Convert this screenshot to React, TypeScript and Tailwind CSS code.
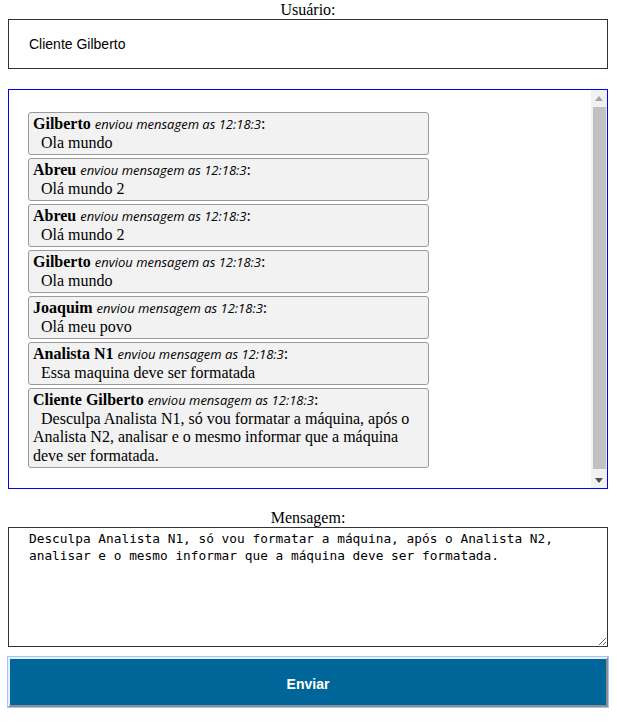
import React from "react";

const messages = [
  { name: "Gilberto", text: "Ola mundo" },
  { name: "Abreu", text: "Olá mundo 2" },
  { name: "Abreu", text: "Olá mundo 2" },
  { name: "Gilberto", text: "Ola mundo" },
  { name: "Joaquim", text: "Olá meu povo" },
  { name: "Analista N1", text: "Essa maquina deve ser formatada" },
  {
    name: "Cliente Gilberto",
    text: "Desculpa Analista N1, só vou formatar a máquina, após o Analista N2, analisar e o mesmo informar que a máquina deve ser formatada.",
  },
];

const serif = { fontFamily: '"Liberation Serif", "Times New Roman", serif' };

export default function App() {
  return (
    <div className="bg-white min-h-[723px] pl-2 pt-0" style={serif}>
      <div className="w-[600px] flex flex-col">
        <div className="text-center text-[16px] leading-[19px] text-black">Usuário:</div>
        <div className="h-[50px] border border-[#333] flex items-center pl-5 text-[14px] text-black font-['Liberation_Sans',Arial,sans-serif]">
          Cliente Gilberto
        </div>

        <div className="mt-5 h-[400px] border border-[#0000ff] flex">
          <div className="flex-1 pt-[22px] pl-[19px] overflow-hidden">
            {messages.map((m, i) => (
              <div
                key={i}
                className="w-[401px] mb-[3px] border border-[#9a9a9a] rounded-[3px] bg-[#f2f2f2] px-1 py-[2px] text-[16px] leading-[18.5px] text-black"
              >
                <div>
                  <b className="font-bold">{m.name}</b>{" "}
                  <i className="italic text-[13px] font-['Open_Sans',sans-serif]">
                    enviou mensagem as 12:18:3
                  </i>
                  :
                </div>
                <div>{"\u00a0\u00a0" + m.text}</div>
              </div>
            ))}
          </div>
          <div className="w-[16px] bg-[#f1f1f1] flex flex-col items-center">
            <div className="h-[16px] w-full flex items-center justify-center">
              <svg width="8" height="5" viewBox="0 0 8 5">
                <polygon points="0,5 8,5 4,0" fill="#a3a3a3" />
              </svg>
            </div>
            <div className="mt-[1px] w-[13px] h-[362px] bg-[#c1c1c1]" />
            <div className="flex-1" />
            <div className="h-[16px] w-full flex items-center justify-center">
              <svg width="8" height="5" viewBox="0 0 8 5">
                <polygon points="0,0 8,0 4,5" fill="#505050" />
              </svg>
            </div>
          </div>
        </div>

        <div className="mt-5 text-center text-[16px] leading-[18px] text-black">Mensagem:</div>
        <textarea
          className="h-[120px] border border-[#333] pl-[20px] pr-2 pt-[2px] text-[12.8px] leading-[17px] text-black font-['DejaVu_Sans_Mono',monospace] resize-y outline-none"
          defaultValue="Desculpa Analista N1, só vou formatar a máquina, após o Analista N2, analisar e o mesmo informar que a máquina deve ser formatada."
        />
        <button className="mt-[10px] h-[50px] pt-[4px] bg-[#006699] text-white font-bold text-[14px] font-['Liberation_Sans',Arial,sans-serif] border-2 border-t-[#e8eefa] border-l-[#e8eefa] border-r-[#8d8d8d] border-b-[#8d8d8d] outline outline-1 outline-[#a6c4fa]">
          Enviar
        </button>
      </div>
    </div>
  );
}
